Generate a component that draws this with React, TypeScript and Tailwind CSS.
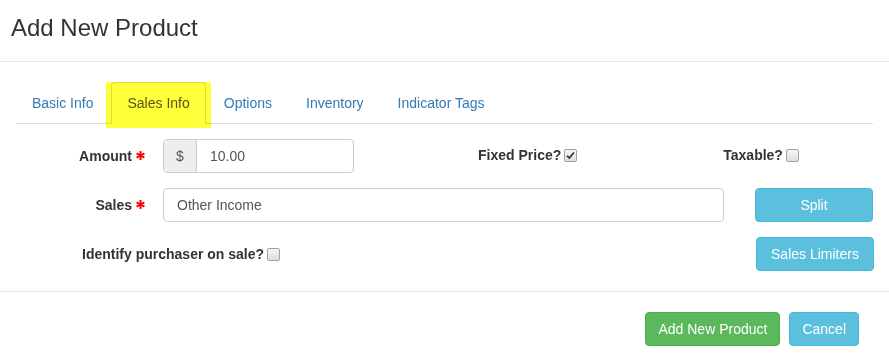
import React from "react";

function Asterisk() {
  return (
    <svg width="9" height="9" viewBox="0 0 9 9" className="-mt-[1px]">
      <g stroke="#ff0000" strokeWidth="2" strokeLinecap="butt">
        <line x1="4.5" y1="0" x2="4.5" y2="9" />
        <line x1="0.6" y1="2.3" x2="8.4" y2="6.7" />
        <line x1="0.6" y1="6.7" x2="8.4" y2="2.3" />
      </g>
    </svg>
  );
}

function Check({ checked }: { checked?: boolean }) {
  return (
    <span className="inline-flex items-center justify-center w-[13px] h-[13px] border border-[#a0a0a0] rounded-[2px] bg-gradient-to-b from-[#f6f6f6] to-[#dedede]">
      {checked && (
        <svg width="9" height="9" viewBox="0 0 9 9">
          <path d="M1 4.8 L3.3 7 L8 1.5" fill="none" stroke="#333" strokeWidth="1.8" />
        </svg>
      )}
    </span>
  );
}

export default function App() {
  const tabs = ["Basic Info", "Sales Info", "Options", "Inventory", "Indicator Tags"];
  return (
    <div className="w-[889px] h-[361px] bg-white text-[14px] text-[#333] font-['Liberation_Sans',Arial,sans-serif] overflow-hidden">
      <div className="h-[62px] border-b border-[#e5e5e5] pl-[11px] pt-[15px]">
        <h4 className="text-[24px] leading-[26px] font-normal text-[#333]">Add New Product</h4>
      </div>
      <div className="px-[16px] pt-[20px]">
        <div className="relative flex border-b border-[#ddd] h-[42px]">
          {tabs.map((t, i) => (
            <div key={t} className="mr-[2px] -mb-px">
              <div
                className={
                  "px-[15px] py-[10px] leading-[20px] border rounded-t-[4px] " +
                  (i === 1
                    ? "border-[#ddd] border-b-transparent bg-white text-[#555]"
                    : "border-transparent text-[#337ab7]")
                }
              >
                {t}
              </div>
            </div>
          ))}
          <div className="absolute left-[90px] top-0 w-[105px] h-[46px] bg-[#ffff3a] mix-blend-multiply pointer-events-none" />
        </div>

        <div className="mt-[15px] flex flex-col gap-[15px]">
          <div className="flex items-center h-[34px]">
            <div className="w-[129px] flex justify-end items-center gap-[4px] font-bold">
              <span>Amount</span>
              <Asterisk />
            </div>
            <div className="ml-[18px] w-[191px] h-[34px] flex border border-[#ccc] rounded-[4px] overflow-hidden">
              <div className="w-[33px] bg-[#eee] border-r border-[#ccc] flex items-center justify-center text-[#555]">$</div>
              <div className="flex-1 flex items-center pl-[13px] text-[#555]">10.00</div>
            </div>
            <div className="ml-[124px] flex items-center gap-[3px] font-bold -mt-[2px]">
              <span>Fixed Price?</span>
              <Check checked />
            </div>
            <div className="ml-[146px] flex items-center gap-[3px] font-bold -mt-[2px]">
              <span>Taxable?</span>
              <Check />
            </div>
          </div>

          <div className="flex items-center h-[34px]">
            <div className="w-[129px] flex justify-end items-center gap-[4px] font-bold">
              <span>Sales</span>
              <Asterisk />
            </div>
            <div className="ml-[18px] w-[561px] h-[34px] border border-[#ccc] rounded-[4px] flex items-center pl-[13px] text-[#555]">
              Other Income
            </div>
            <button className="ml-[31px] w-[118px] h-[34px] bg-[#5bc0de] border border-[#46b8da] rounded-[4px] text-white">
              Split
            </button>
          </div>

          <div className="flex items-center h-[34px]">
            <div className="ml-[66px] flex items-center gap-[3px] font-bold mt-[1px]">
              <span>Identify purchaser on sale?</span>
              <Check />
            </div>
            <button className="ml-auto -mr-[1px] w-[118px] h-[34px] bg-[#5bc0de] border border-[#46b8da] rounded-[4px] text-white">
              Sales Limiters
            </button>
          </div>
        </div>
      </div>

      <div className="mt-[20px] border-t border-[#e5e5e5] pt-[20px] pr-[30px] flex justify-end gap-[9px]">
        <button className="h-[34px] px-[12px] bg-[#5cb85c] border border-[#4cae4c] rounded-[4px] text-white">
          Add New Product
        </button>
        <button className="h-[34px] px-[12px] bg-[#5bc0de] border border-[#46b8da] rounded-[4px] text-white">
          Cancel
        </button>
      </div>
    </div>
  );
}
